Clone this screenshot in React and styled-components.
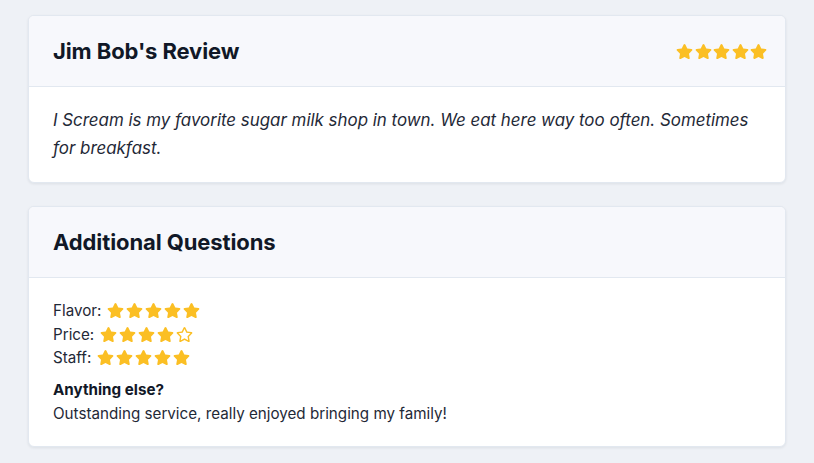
import React from "react";
import styled, { createGlobalStyle } from "styled-components";
import { FaStar, FaRegStar } from "react-icons/fa";

const GlobalStyle = createGlobalStyle`
  body {
    margin: 0;
    background: #eef1f6;
    font-family: Inter, "Noto Sans", sans-serif;
    color: #111827;
  }
`;

const Page = styled.div`
  display: flex;
  flex-direction: column;
  gap: 23px;
  padding: 15px 28px 16px 28px;
`;

const Card = styled.section`
  background: #ffffff;
  border: 1px solid #e2e8f0;
  border-radius: 6px;
  box-shadow: 0 1px 3px rgba(15, 23, 42, 0.08);
  overflow: hidden;
`;

const Header = styled.div`
  display: flex;
  align-items: center;
  justify-content: space-between;
  height: 70px;
  padding: 0 18px 0 24px;
  background: #f7f8fc;
  border-bottom: 1px solid #e2e8f0;
`;

const Title = styled.h2`
  margin: 0;
  font-size: 22px;
  font-weight: 700;
  letter-spacing: -0.1px;
  color: #111827;
`;

const Body = styled.div`
  padding: ${(p) => p.$pad || "19px 24px 20px"};
`;

const Quote = styled.p`
  margin: 0;
  font-size: 16.9px;
  font-style: italic;
  line-height: 28px;
  color: #1f2937;
`;

const Row = styled.div`
  display: flex;
  align-items: center;
  gap: 6px;
  font-size: 15.2px;
  line-height: 23.5px;
  color: #1f2937;
`;

const Stars = styled.span`
  display: inline-flex;
  align-items: center;
  gap: ${(p) => p.$gap ?? 1}px;
  color: #fbbf24;
`;

const Label = styled.div`
  margin-top: 8px;
  font-size: 15.2px;
  font-weight: 700;
  line-height: 24px;
  color: #111827;
`;

const Answer = styled.div`
  font-size: 15.2px;
  line-height: 24px;
  color: #1f2937;
`;

function Rating({ value, size = 18, gap }) {
  return (
    <Stars $gap={gap}>
      {[1, 2, 3, 4, 5].map((i) =>
        i <= value ? <FaStar key={i} size={size} /> : <FaRegStar key={i} size={size} />
      )}
    </Stars>
  );
}

const questions = [
  { label: "Flavor:", value: 5 },
  { label: "Price:", value: 4 },
  { label: "Staff:", value: 5 },
];

export default function App() {
  return (
    <>
      <GlobalStyle />
      <Page>
        <Card>
          <Header>
            <Title>Jim Bob's Review</Title>
            <Rating value={5} size={17} gap={1.5} />
          </Header>
          <Body>
            <Quote>
              I Scream is my favorite sugar milk shop in town. We eat here way too often.
              Sometimes for breakfast.
            </Quote>
          </Body>
        </Card>
        <Card>
          <Header>
            <Title>Additional Questions</Title>
          </Header>
          <Body $pad="21px 24px 20px">
            {questions.map((q) => (
              <Row key={q.label}>
                {q.label}
                <Rating value={q.value} size={17} gap={2} />
              </Row>
            ))}
            <Label>Anything else?</Label>
            <Answer>Outstanding service, really enjoyed bringing my family!</Answer>
          </Body>
        </Card>
      </Page>
    </>
  );
}
